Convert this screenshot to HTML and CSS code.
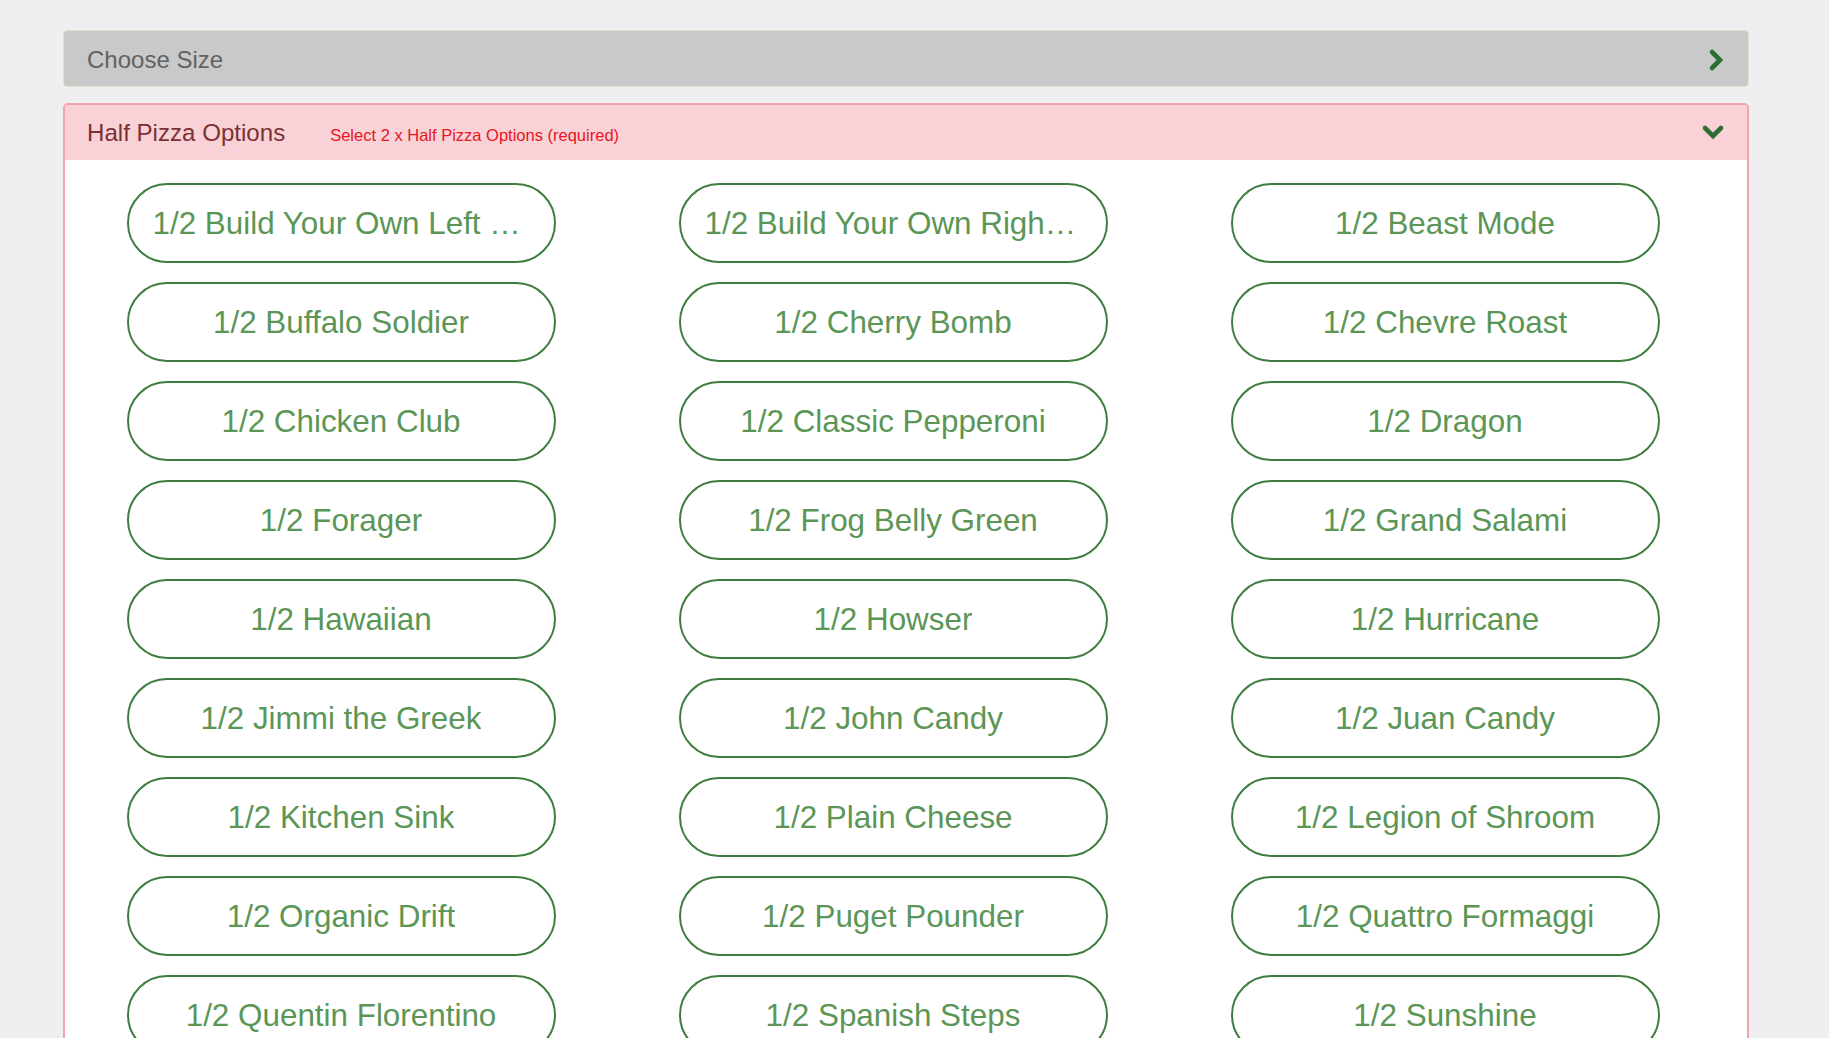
FILE: index.html
```html
<!DOCTYPE html>
<html lang="en">
<head>
<meta charset="utf-8">
<title>Half Pizza Options</title>
<link rel="stylesheet" href="styles.css">
</head>
<body>
<div class="wrap">
  <div class="size-bar">
    <span class="size-label">Choose Size</span>
    <svg class="chev" width="18" height="24" viewBox="0 0 18 24"><polyline points="5,4 13,12 5,20" fill="none" stroke="#2e6e34" stroke-width="4.6" stroke-linejoin="miter" stroke-linecap="round"/></svg>
  </div>
  <div class="panel">
    <div class="panel-head">
      <span class="panel-title">Half Pizza Options</span>
      <span class="panel-req">Select 2 x Half Pizza Options (required)</span>
      <svg class="chev-down" width="24" height="18" viewBox="0 0 24 18"><polyline points="4,5 12,13 20,5" fill="none" stroke="#2e6e34" stroke-width="4.6" stroke-linejoin="miter" stroke-linecap="round"/></svg>
    </div>
    <div class="panel-body">
      <div class="opt"><span class="opt-text">1/2 Build Your Own Left Half</span></div>
      <div class="opt"><span class="opt-text">1/2 Build Your Own Right Half</span></div>
      <div class="opt"><span class="opt-text">1/2 Beast Mode</span></div>
      <div class="opt"><span class="opt-text">1/2 Buffalo Soldier</span></div>
      <div class="opt"><span class="opt-text">1/2 Cherry Bomb</span></div>
      <div class="opt"><span class="opt-text">1/2 Chevre Roast</span></div>
      <div class="opt"><span class="opt-text">1/2 Chicken Club</span></div>
      <div class="opt"><span class="opt-text">1/2 Classic Pepperoni</span></div>
      <div class="opt"><span class="opt-text">1/2 Dragon</span></div>
      <div class="opt"><span class="opt-text">1/2 Forager</span></div>
      <div class="opt"><span class="opt-text">1/2 Frog Belly Green</span></div>
      <div class="opt"><span class="opt-text">1/2 Grand Salami</span></div>
      <div class="opt"><span class="opt-text">1/2 Hawaiian</span></div>
      <div class="opt"><span class="opt-text">1/2 Howser</span></div>
      <div class="opt"><span class="opt-text">1/2 Hurricane</span></div>
      <div class="opt"><span class="opt-text">1/2 Jimmi the Greek</span></div>
      <div class="opt"><span class="opt-text">1/2 John Candy</span></div>
      <div class="opt"><span class="opt-text">1/2 Juan Candy</span></div>
      <div class="opt"><span class="opt-text">1/2 Kitchen Sink</span></div>
      <div class="opt"><span class="opt-text">1/2 Plain Cheese</span></div>
      <div class="opt"><span class="opt-text">1/2 Legion of Shroom</span></div>
      <div class="opt"><span class="opt-text">1/2 Organic Drift</span></div>
      <div class="opt"><span class="opt-text">1/2 Puget Pounder</span></div>
      <div class="opt"><span class="opt-text">1/2 Quattro Formaggi</span></div>
      <div class="opt"><span class="opt-text">1/2 Quentin Florentino</span></div>
      <div class="opt"><span class="opt-text">1/2 Spanish Steps</span></div>
      <div class="opt"><span class="opt-text">1/2 Sunshine</span></div>
    </div>
  </div>
</div>
</body>
</html>
```
FILE: styles.css
```css
html, body {
  margin: 0;
  padding: 0;
  background: #efeff1;
  font-family: "Liberation Sans", Arial, sans-serif;
}
body {
  height: 1038px;
  overflow: hidden;
}
.wrap {
  margin-left: 63px;
  width: 1686px;
  padding-top: 30px;
}
.size-bar {
  box-sizing: border-box;
  height: 57px;
  background: #c9c9c9;
  border: 1px solid #d6e8cd;
  border-radius: 4px;
  display: flex;
  align-items: center;
  justify-content: space-between;
  padding: 0 23px 0 23px;
}
.size-label {
  font-size: 24px;
  color: #626262;
  padding-top: 2px;
}
.chev {
  display: block;
  margin-top: 2px;
}
.panel {
  margin-top: 16px;
  border: 2px solid #f0a4ab;
  border-radius: 5px;
  background: #ffffff;
}
.panel-head {
  box-sizing: border-box;
  height: 55px;
  background: #f8d2d6;
  border-radius: 3px 3px 0 0;
  display: flex;
  align-items: baseline;
  padding: 14px 22px 0 22px;
}
.panel-title {
  font-size: 24.1px;
  color: #7d3134;
}
.panel-req {
  margin-left: 45px;
  font-size: 16.5px;
  color: #e8141e;
}
.chev-down {
  margin-left: auto;
  align-self: center;
  margin-top: -15px;
  display: block;
}
.panel-body {
  display: grid;
  grid-template-columns: repeat(3, 552px);
  row-gap: 19px;
  justify-items: center;
  padding: 23px 0 40px 0;
}
.opt {
  box-sizing: border-box;
  width: 429px;
  height: 80px;
  border: 2px solid #3f7d3f;
  border-radius: 40px;
  padding: 2px 24px 0 24px;
  display: flex;
  align-items: center;
  justify-content: center;
}
.opt-text {
  display: block;
  max-width: 100%;
  white-space: nowrap;
  overflow: hidden;
  text-overflow: ellipsis;
  font-size: 31.4px;
  color: #5b9657;
  text-align: center;
}
```
